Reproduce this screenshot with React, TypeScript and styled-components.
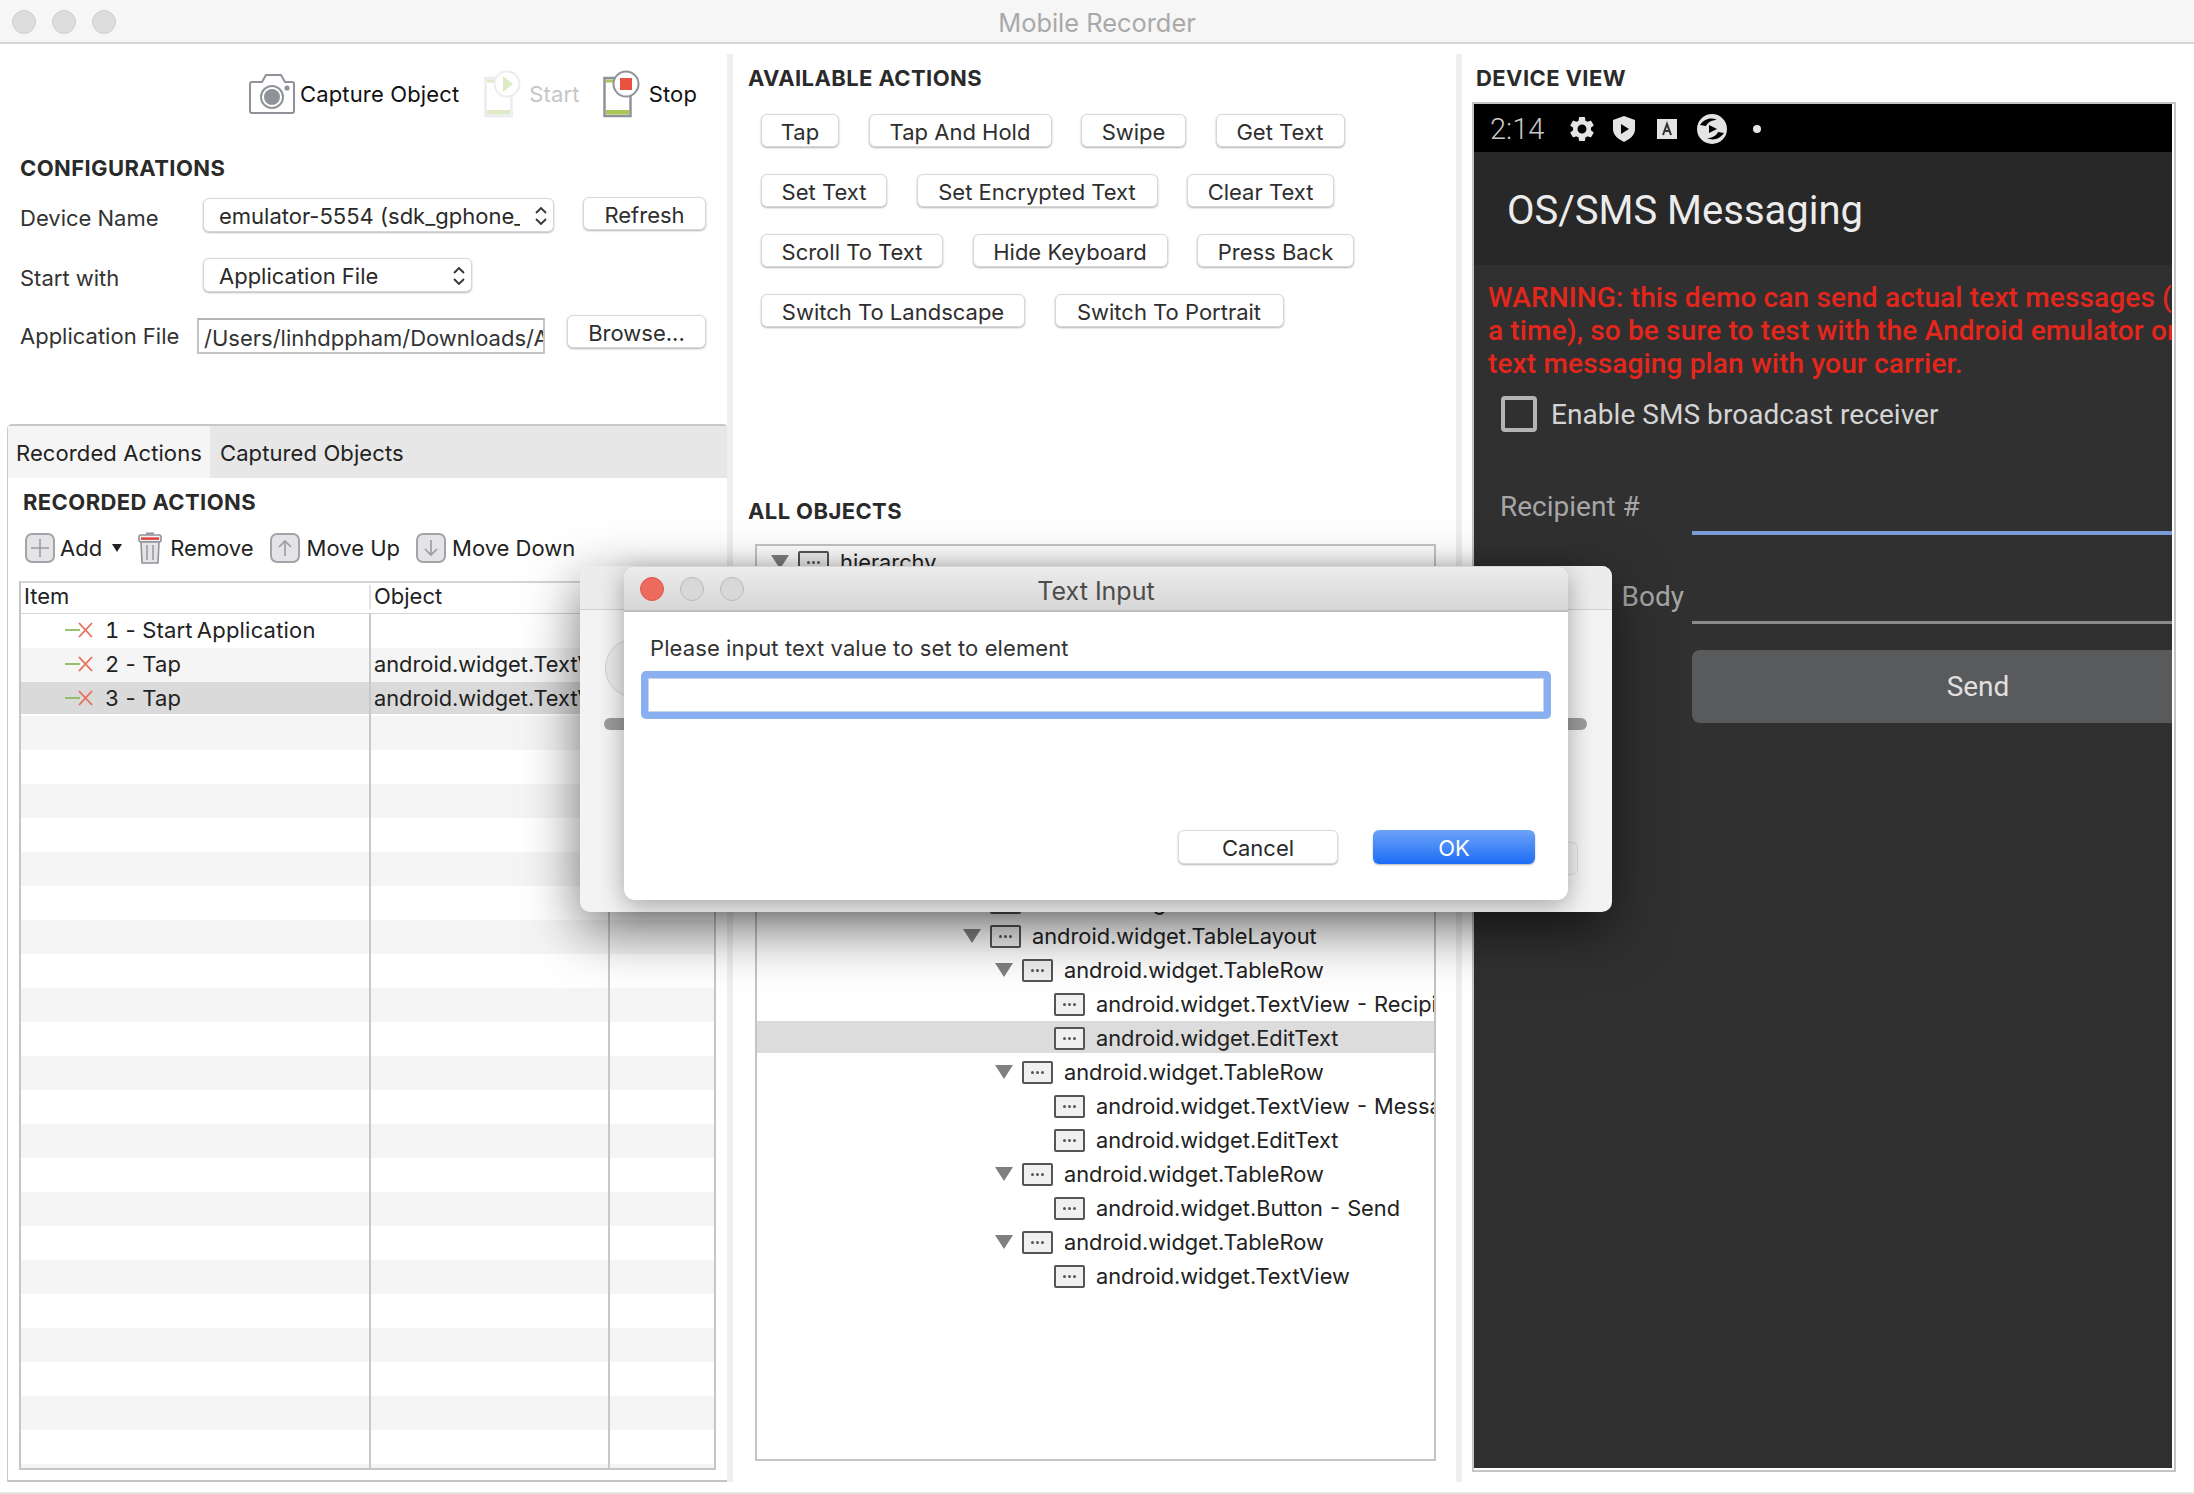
import React from "react";
import styled, { createGlobalStyle } from "styled-components";
import { MdSettings } from "react-icons/md";

const GlobalStyle = createGlobalStyle`
  html, body {
    margin: 0;
    padding: 0;
    background: #fff;
  }
  * {
    box-sizing: border-box;
  }
`;

const StyledApp = styled.div`
  position: relative;
  width: 2194px;
  height: 1494px;
  overflow: hidden;
  display: flex;
  flex-direction: column;
  background: #fff;
  color: #1f1f1f;
  font-family: Inter, "Liberation Sans", sans-serif;
  font-size: 22px;
`;

const TitleBar = styled.div`
  position: relative;
  flex: none;
  height: 44px;
  padding-top: 2px;
  display: flex;
  align-items: center;
  justify-content: center;
  background: #f6f6f6;
  border-bottom: 2px solid #d6d6d6;
  color: #a9a9a9;
  font-size: 25.4px;
`;

const Lights = styled.div`
  position: absolute;
  left: 12px;
  top: 10px;
  display: flex;
  gap: 16px;
`;

const Light = styled.span<{ $color?: string }>`
  width: 24px;
  height: 24px;
  border-radius: 50%;
  background: ${(p) => p.$color ?? "#dcdcdc"};
  border: 1px solid ${(p) => (p.$color ? "#d9574e" : "#cfcfcf")};
`;

const DialogLight = styled(Light)`
  background: ${(p) => p.$color ?? "#d8d8d8"};
  border-color: ${(p) => (p.$color ? "#d9574e" : "#b9b9b9")};
`;

const Body = styled.div`
  flex: 1;
  min-height: 0;
  display: flex;
  padding: 10px 0 10px;
`;

const Footer = styled.div`
  flex: none;
  height: 2px;
  background: #e5e5e5;
`;

const Sash = styled.div`
  flex: none;
  width: 6px;
  background: #efefef;
`;

const LeftColumn = styled.div`
  flex: none;
  width: 727px;
  display: flex;
  flex-direction: column;
`;

const MiddleColumn = styled.div`
  flex: none;
  width: 723px;
  padding: 10px 0 0 15px;
`;

const RightColumn = styled.div`
  flex: none;
  width: 732px;
  padding: 10px 0 0 10px;
`;

const TopBar = styled.div`
  margin-top: 16px;
  height: 48px;
  padding-left: 248px;
  display: flex;
  align-items: center;
  letter-spacing: 0.15px;
`;

const TopItem = styled.div<{ $gap: number; $after: number; $faded?: boolean }>`
  display: flex;
  align-items: center;
  gap: ${(p) => p.$gap}px;
  margin-right: ${(p) => p.$after}px;
  color: ${(p) => (p.$faded ? "#c6c6c6" : "#111")};
`;

const Heading = styled.h2<{ $left?: number; $top?: number }>`
  margin: ${(p) => p.$top ?? 0}px 0 0 ${(p) => p.$left ?? 0}px;
  height: 28px;
  line-height: 28px;
  font-size: 22px;
  font-weight: 700;
  letter-spacing: 0.4px;
  color: #2a2a2a;
`;

const FieldRow = styled.div<{ $top: number }>`
  display: flex;
  align-items: flex-start;
  margin-top: ${(p) => p.$top}px;
  padding-left: 20px;
  height: 34px;
`;

const FieldLabel = styled.span<{ $width: number; $drop: number }>`
  flex: none;
  width: ${(p) => p.$width}px;
  line-height: 34px;
  margin-top: ${(p) => p.$drop}px;
  color: #333;
`;

const Select = styled.div<{ $width: number }>`
  flex: none;
  width: ${(p) => p.$width}px;
  height: 34px;
  padding: 2px 5px 0 15px;
  display: flex;
  align-items: center;
  justify-content: space-between;
  background: #fff;
  border: 1px solid #d6d6d6;
  border-radius: 6px;
  box-shadow: 0 1px 2px rgba(0, 0, 0, 0.28);
  color: #2a2a2a;
  white-space: nowrap;
  overflow: hidden;
`;

const SelectText = styled.span`
  overflow: hidden;
  flex: 1;
  margin-right: 14px;
`;

const PathInput = styled.div`
  flex: none;
  width: 348px;
  height: 36px;
  margin-top: 3px;
  padding: 0 4px 0 5px;
  line-height: 36px;
  border: 2px solid #c4c4c4;
  border-top-color: #b4b4b4;
  white-space: nowrap;
  overflow: hidden;
  color: #333;
`;

const PushButton = styled.div<{ $width: number; $left?: number; $drop?: number }>`
  flex: none;
  width: ${(p) => p.$width}px;
  height: 33px;
  margin-left: ${(p) => p.$left ?? 0}px;
  margin-top: ${(p) => p.$drop ?? 0}px;
  display: flex;
  align-items: center;
  justify-content: center;
  padding-top: 3px;
  background: #fff;
  border: 1px solid #d8d8d8;
  border-radius: 6px;
  box-shadow: 0 1px 2px rgba(0, 0, 0, 0.3);
  color: #2e2e2e;
  white-space: nowrap;
`;

const TabPane = styled.div`
  margin: auto 0 0 7px;
  width: 721px;
  height: 1058px;
  display: flex;
  flex-direction: column;
  border: 1px solid #cbcbcb;
  border-top: 2px solid #c8c8c8;
  border-bottom: 2px solid #c4c4c4;
  border-radius: 5px 5px 0 0;
`;

const TabBar = styled.div`
  flex: none;
  height: 52px;
  display: flex;
  background: #e7e7e7;
`;

const Tab = styled.div<{ $active?: boolean }>`
  width: ${(p) => (p.$active ? 202 : 240)}px;
  padding-left: ${(p) => (p.$active ? 8 : 10)}px;
  line-height: 54px;
  letter-spacing: 0.1px;
  background: ${(p) => (p.$active ? "#f5f5f5" : "transparent")};
  color: #222;
`;

const ActionBar = styled.div`
  margin: 14px 0 0 17px;
  height: 36px;
  display: flex;
  align-items: center;
`;

const ActionItem = styled.div<{ $gap: number; $after: number }>`
  display: flex;
  align-items: center;
  gap: ${(p) => p.$gap}px;
  margin-right: ${(p) => p.$after}px;
  color: #222;
`;

const Table = styled.div`
  margin: 15px 0 0 11px;
  width: 697px;
  height: 889px;
  overflow: hidden;
  border: 2px solid #c6c6c6;
  border-top-color: #d4d4d4;
`;

const TableHead = styled.div`
  height: 31px;
  padding-bottom: 2px;
  display: grid;
  grid-template-columns: 350px 239px 1fr;
  align-items: center;
  border-bottom: 1px solid #d4d4d4;
`;

const HeadCell = styled.div<{ $divider?: boolean }>`
  padding-left: 3px;
  height: 24px;
  line-height: 22px;
  border-right: ${(p) => (p.$divider ? "2px solid #e2e2e2" : "none")};
  color: #222;
`;

const TableRow = styled.div<{ $stripe: boolean; $selected: boolean }>`
  height: 34px;
  display: grid;
  grid-template-columns: 350px 239px 1fr;
  background: ${(p) => (p.$selected ? "linear-gradient(#dadada 32px, #fff 32px)" : p.$stripe ? "#f4f5f4" : "#fff")};
`;

const Cell = styled.div`
  display: flex;
  align-items: center;
  padding: 0 0 2px 3px;
  border-right: 2px solid #c8c8c8;
  font-size: 21.8px;
  white-space: nowrap;
  overflow: hidden;
  color: #222;
`;

const ItemCell = styled(Cell)`
  padding-left: 43px;
  gap: 11px;
  font-size: 22px;
  font-variant-numeric: tabular-nums;
  letter-spacing: 0.2px;
  word-spacing: -2px;
`;

const ButtonRows = styled.div`
  margin: 22px 0 0 13px;
  display: flex;
  flex-direction: column;
  gap: 27px;
`;

const ButtonRow = styled.div`
  display: flex;
  gap: 29.5px;
`;

const TreeBox = styled.div`
  margin: 19px 0 0 7px;
  width: 681px;
  height: 917px;
  border: 2px solid #c4c4c4;
  overflow: hidden;
  background: #fff;
`;

const TreeList = styled.div`
  margin-top: -2px;
`;

const TreeRow = styled.div<{ $level: number; $selected?: boolean }>`
  height: 34px;
  display: flex;
  align-items: center;
  padding: 2px 0 0 ${(p) => 14 + p.$level * 32}px;
  background: ${(p) => (p.$selected ? "linear-gradient(#fff 1px, #dcdcdc 1px, #dcdcdc 33px, #fff 33px)" : "transparent")};
  font-size: 21.8px;
  word-spacing: 1px;
  white-space: nowrap;
  color: #222;
`;

const TwistySlot = styled.span`
  flex: none;
  width: 18px;
  height: 14px;
  margin-right: 9px;
  display: flex;
`;

const TreeIconBox = styled.span`
  flex: none;
  width: 31px;
  height: 23px;
  margin: 0 11px 0 0;
  display: flex;
  align-items: center;
  justify-content: center;
  gap: 2px;
  background: #f0f0f0;
  border: 2px solid #555;
  border-radius: 2px;
`;

const Dot = styled.i`
  width: 3px;
  height: 3px;
  border-radius: 50%;
  background: #555;
`;

const DeviceFrame = styled.div`
  width: 704px;
  height: 1370px;
  margin-top: 10px;
  padding: 0 2px 2px 0;
  border: 2px solid #c4c4c4;
  background: #fff;
`;

const Screen = styled.div`
  height: 100%;
  display: flex;
  flex-direction: column;
  overflow: hidden;
  background: #303030;
  font-family: Roboto, "Liberation Sans", sans-serif;
`;

const StatusBar = styled.div`
  flex: none;
  height: 48px;
  padding: 2px 0 0 16px;
  display: flex;
  align-items: center;
  background: #000;
  color: #c8c8c8;
  font-size: 29px;
  font-weight: 300;
`;

const StatusTime = styled.span`
  width: 77px;
`;

const StatusIcon = styled.span<{ $after: number }>`
  display: flex;
  margin-right: ${(p) => p.$after}px;
`;

const AppBar = styled.div`
  flex: none;
  height: 113px;
  padding: 4px 0 0 33px;
  display: flex;
  align-items: center;
  background: #282828;
  color: #ececec;
  font-size: 40px;
  white-space: nowrap;
`;

const Warning = styled.div`
  margin: 16px 0 0 14px;
  width: 760px;
  font-size: 28px;
  font-weight: 500;
  letter-spacing: 0.15px;
  line-height: 33px;
  color: #e4261c;
  white-space: nowrap;
`;

const CheckRow = styled.div`
  margin: 16px 0 0 27px;
  display: flex;
  align-items: center;
  gap: 14px;
  color: #d4d4d4;
  font-size: 28px;
  letter-spacing: 0.05px;
  white-space: nowrap;
`;

const CheckBox = styled.span`
  flex: none;
  width: 36px;
  height: 36px;
  border: 4px solid #b4b4b4;
  border-radius: 4px;
`;

const FormRow = styled.div<{ $height: number; $top: number }>`
  height: ${(p) => p.$height}px;
  margin-top: ${(p) => p.$top}px;
  display: flex;
  align-items: flex-end;
  padding-left: 14px;
`;

const FormLabel = styled.div<{ $right?: boolean; $lift: number }>`
  flex: none;
  width: 204px;
  height: 36px;
  line-height: 36px;
  margin-bottom: ${(p) => p.$lift}px;
  padding: ${(p) => (p.$right ? "0 8px 0 0" : "0 0 0 12px")};
  text-align: ${(p) => (p.$right ? "right" : "left")};
  font-size: 28px;
  color: #a6a6a6;
`;

const FieldLine = styled.div<{ $color: string; $thick: number }>`
  flex: 1;
  height: ${(p) => p.$thick}px;
  background: ${(p) => p.$color};
`;

const SendButton = styled.div`
  flex: none;
  width: 572px;
  height: 73px;
  margin: 26px 0 0 218px;
  display: flex;
  align-items: center;
  justify-content: center;
  border-radius: 8px;
  background: #595a5c;
  color: #e0e0e0;
  font-size: 28px;
`;

const BackDialog = styled.div`
  position: absolute;
  left: 580px;
  top: 566px;
  width: 1032px;
  height: 346px;
  overflow: hidden;
  border-radius: 10px;
  background: #f3f3f3;
  box-shadow: 0 18px 55px rgba(0, 0, 0, 0.55);
`;

const BackTitle = styled.div`
  height: 44px;
  background: #ececec;
  border-bottom: 1px solid #cfcfcf;
`;

const GhostKnob = styled.div`
  position: absolute;
  left: 25px;
  top: 72px;
  width: 60px;
  height: 60px;
  border-radius: 50%;
  background: #e9e9e9;
  border: 1px solid #cdcdcd;
`;

const GhostPill = styled.div<{ $x: number }>`
  position: absolute;
  left: ${(p) => p.$x}px;
  top: 152px;
  width: 60px;
  height: 12px;
  border-radius: 6px;
  background: #9b9b9b;
`;

const GhostButton = styled.div`
  position: absolute;
  left: 960px;
  top: 276px;
  width: 38px;
  height: 33px;
  border-radius: 6px;
  background: #f1f1f1;
  border: 1px solid #dcdcdc;
`;

const Dialog = styled.div`
  position: absolute;
  left: 624px;
  top: 567px;
  width: 944px;
  height: 333px;
  display: flex;
  flex-direction: column;
  overflow: hidden;
  border-radius: 11px;
  background: #fff;
  box-shadow: 0 6px 26px rgba(0, 0, 0, 0.32);
`;

const DialogTitle = styled.div`
  flex: none;
  height: 45px;
  display: grid;
  grid-template-columns: 1fr auto 1fr;
  align-items: center;
  padding: 0 16px;
  background: linear-gradient(#ececec, #d6d6d6);
  border-bottom: 2px solid #bdbdbd;
  color: #4c4c4c;
  font-size: 25px;
`;

const DialogHeading = styled.span`
  padding-top: 4px;
`;

const DialogLights = styled.div`
  display: flex;
  gap: 16px;
`;

const DialogBody = styled.div`
  flex: 1;
  display: flex;
  flex-direction: column;
  padding: 22px 17px 0 17px;
`;

const Prompt = styled.div`
  padding-left: 9px;
  line-height: 28px;
  letter-spacing: 0.1px;
  color: #333;
`;

const TextBox = styled.div`
  margin-top: 9px;
  height: 48px;
  background: #fff;
  border: 7px solid #8ab0f2;
  border-radius: 5px;
  box-shadow: inset 0 0 0 1px #c8d4ea;
`;

const DialogActions = styled.div`
  margin-top: 111px;
  display: flex;
  justify-content: flex-end;
  gap: 35px;
  padding-right: 16px;
`;

const DialogButton = styled.div<{ $primary?: boolean }>`
  width: ${(p) => (p.$primary ? 162 : 160)}px;
  height: 34px;
  padding-top: 2px;
  display: flex;
  align-items: center;
  justify-content: center;
  border-radius: 6px;
  border: ${(p) => (p.$primary ? "none" : "1px solid #dcdcdc")};
  background: ${(p) => (p.$primary ? "linear-gradient(#6da3f8, #1d6df6)" : "#fff")};
  box-shadow: 0 1px 2px rgba(0, 0, 0, 0.3);
  color: ${(p) => (p.$primary ? "#fff" : "#2a2a2a")};
`;

const CameraIcon = () => (
  <svg width="48" height="42" viewBox="0 0 48 42">
    <path d="M2 11a2 2 0 0 1 2-2h10l4-7h15l4 7h7a2 2 0 0 1 2 2v27a2 2 0 0 1-2 2H4a2 2 0 0 1-2-2z" fill="#fff" stroke="#8f9299" strokeWidth="2" />
    <circle cx="24" cy="24" r="11" fill="#fff" stroke="#8f9299" strokeWidth="2" />
    <circle cx="24" cy="24" r="8" fill="#8f9299" />
    <circle cx="39" cy="15" r="2.6" fill="#8f9299" />
  </svg>
);

const PhoneIcon = ({ faded, stop }: { faded?: boolean; stop?: boolean }) => {
  const line = faded ? "#ebecef" : "#8f9299";
  const green = faded ? "#dfeac6" : "#a9c755";
  return (
    <svg width="38" height="48" viewBox="0 0 38 48">
      <rect x="1.5" y="8" width="26" height="38" fill="#fff" stroke={line} strokeWidth="2.5" />
      <rect x="3" y="9.5" width="10" height="3" fill={green} />
      <rect x="3" y="40" width="23" height="4.5" fill={green} />
      <circle cx="23" cy="14" r="12.5" fill="#fff" stroke={line} strokeWidth="2" />
      {stop ? <rect x="17" y="8" width="12" height="12" fill="#e8523f" /> : <path d="M19 6l10 8-10 8z" fill={green} />}
    </svg>
  );
};

const PlusIcon = () => (
  <svg width="30" height="30" viewBox="0 0 30 30">
    <rect x="1" y="1" width="28" height="28" rx="6" fill="#e4e4e7" stroke="#a2a4aa" strokeWidth="2" />
    <path d="M15 6v18M6 15h18" stroke="#9a9ca2" strokeWidth="1.6" />
  </svg>
);

const ArrowIcon = ({ down }: { down?: boolean }) => (
  <svg width="30" height="30" viewBox="0 0 30 30">
    <rect x="1" y="1" width="28" height="28" rx="6" fill="#e4e4e7" stroke="#a2a4aa" strokeWidth="2" />
    {down ? (
      <path d="M15 7v15M9 16l6 6 6-6" fill="none" stroke="#9a9ca2" strokeWidth="1.6" />
    ) : (
      <path d="M15 23V8M9 14l6-6 6 6" fill="none" stroke="#9a9ca2" strokeWidth="1.6" />
    )}
  </svg>
);

const TrashIcon = () => (
  <svg width="24" height="32" viewBox="0 0 24 32">
    <path d="M8 1.5h8" stroke="#8f9299" strokeWidth="2" />
    <rect x="1" y="3" width="22" height="7" rx="2" fill="#f0f0f2" stroke="#8f9299" strokeWidth="1.6" />
    <rect x="3" y="5.4" width="18" height="2.4" fill="#e33b32" />
    <path d="M3 10h18l-1 21H4z" fill="#e4e4e7" stroke="#8f9299" strokeWidth="1.6" />
    <path d="M9 13v15M15 13v15" stroke="#8f9299" strokeWidth="1.4" />
  </svg>
);

const StepIcon = () => (
  <svg width="30" height="16" viewBox="0 0 30 16">
    <path d="M1 8h15" stroke="#8dbb63" strokeWidth="1.8" />
    <path d="M15 1l13 14M28 1L15 15" stroke="#e96a56" strokeWidth="1.8" />
  </svg>
);

const Chevrons = () => (
  <svg width="14" height="22" viewBox="0 0 14 22">
    <path d="M2 8l5-5 5 5M2 14l5 5 5-5" fill="none" stroke="#333" strokeWidth="1.8" />
  </svg>
);

const Twisty = () => (
  <svg width="18" height="14" viewBox="0 0 18 14">
    <path d="M0 0h18l-9 14z" fill="#808080" />
  </svg>
);

const DropArrow = () => (
  <svg width="10" height="8" viewBox="0 0 10 8">
    <path d="M0 0h10L5 8z" fill="#222" />
  </svg>
);

const ShieldPlay = () => (
  <svg width="24" height="28" viewBox="0 0 24 28">
    <path d="M12 1l11 4v9c0 6-5 10-11 13C6 24 1 20 1 14V5z" fill="#e4e4e4" />
    <path d="M9 9l8 5-8 5z" fill="#000" />
  </svg>
);

const BoxA = () => (
  <svg width="20" height="20" viewBox="0 0 20 20">
    <rect width="20" height="20" fill="#e4e4e4" />
    <path d="M6 16l4-11 4 11M7.5 12h5" fill="none" stroke="#333" strokeWidth="2" />
  </svg>
);

const Swirl = () => (
  <svg width="30" height="30" viewBox="0 0 30 30">
    <circle cx="15" cy="15" r="15" fill="#e4e4e4" />
    <path d="M3 11c4-6 11-8 17-5-5 0-9 2-11 6zM27 19c-4 6-11 8-17 5 5 0 9-2 11-6z" fill="#000" />
    <path d="M12 11l8 4-8 4z" fill="#000" />
  </svg>
);

const ACTION_ROWS: [string, number][][] = [
  [["Tap", 78], ["Tap And Hold", 183], ["Swipe", 105], ["Get Text", 129]],
  [["Set Text", 126], ["Set Encrypted Text", 241], ["Clear Text", 147]],
  [["Scroll To Text", 182], ["Hide Keyboard", 195], ["Press Back", 157]],
  [["Switch To Landscape", 264], ["Switch To Portrait", 229]],
];

const STEPS = [
  { label: "1 - Start Application", object: "" },
  { label: "2 - Tap", object: "android.widget.TextView - Recipient #" },
  { label: "3 - Tap", object: "android.widget.TextView - Recipient #" },
];

type Node = { level: number; name: string; open?: boolean; selected?: boolean };

const TREE: Node[] = [
  { level: 0, name: "hierarchy", open: true },
  { level: 1, name: "android.widget.FrameLayout", open: true },
  { level: 2, name: "android.widget.LinearLayout", open: true },
  { level: 3, name: "android.widget.FrameLayout", open: true },
  { level: 4, name: "android.widget.LinearLayout", open: true },
  { level: 5, name: "android.widget.FrameLayout", open: true },
  { level: 6, name: "android.widget.TextView" },
  { level: 6, name: "android.widget.TextView" },
  { level: 6, name: "android.widget.TextView" },
  { level: 6, name: "android.widget.CheckBox" },
  { level: 6, name: "android.widget.TextView" },
  { level: 6, name: "android.widget.TableLayout", open: true },
  { level: 7, name: "android.widget.TableRow", open: true },
  { level: 8, name: "android.widget.TextView - Recipient #" },
  { level: 8, name: "android.widget.EditText", selected: true },
  { level: 7, name: "android.widget.TableRow", open: true },
  { level: 8, name: "android.widget.TextView - Message Body" },
  { level: 8, name: "android.widget.EditText" },
  { level: 7, name: "android.widget.TableRow", open: true },
  { level: 8, name: "android.widget.Button - Send" },
  { level: 7, name: "android.widget.TableRow", open: true },
  { level: 8, name: "android.widget.TextView" },
];

const App = () => {
  return (
    <StyledApp>
      <GlobalStyle />
      <TitleBar>
        <Lights>
          <Light />
          <Light />
          <Light />
        </Lights>
        Mobile Recorder
      </TitleBar>
      <Body>
        <LeftColumn>
          <TopBar>
            <TopItem $gap={4} $after={25}>
              <CameraIcon />
              Capture Object
            </TopItem>
            <TopItem $gap={7} $after={23} $faded>
              <PhoneIcon faded />
              Start
            </TopItem>
            <TopItem $gap={8} $after={0}>
              <PhoneIcon stop />
              Stop
            </TopItem>
          </TopBar>
          <Heading $left={20} $top={36}>
            CONFIGURATIONS
          </Heading>
          <FieldRow $top={16}>
            <FieldLabel $width={183} $drop={3}>
              Device Name
            </FieldLabel>
            <Select $width={351}>
              <SelectText>emulator-5554 (sdk_gphone_x86)</SelectText>
              <Chevrons />
            </Select>
            <PushButton $width={123} $left={29} $drop={-1}>
              Refresh
            </PushButton>
          </FieldRow>
          <FieldRow $top={26}>
            <FieldLabel $width={183} $drop={3}>
              Start with
            </FieldLabel>
            <Select $width={269}>
              <SelectText>Application File</SelectText>
              <Chevrons />
            </Select>
          </FieldRow>
          <FieldRow $top={23}>
            <FieldLabel $width={177} $drop={4}>
              Application File
            </FieldLabel>
            <PathInput>/Users/linhdppham/Downloads/Application.apk</PathInput>
            <PushButton $width={139} $left={22}>
              Browse...
            </PushButton>
          </FieldRow>
          <TabPane>
            <TabBar>
              <Tab $active>Recorded Actions</Tab>
              <Tab>Captured Objects</Tab>
            </TabBar>
            <Heading $left={15} $top={10}>
              RECORDED ACTIONS
            </Heading>
            <ActionBar>
              <ActionItem $gap={5} $after={10}>
                <PlusIcon />
                Add
              </ActionItem>
              <ActionItem $gap={0} $after={16}>
                <DropArrow />
              </ActionItem>
              <ActionItem $gap={8} $after={16}>
                <TrashIcon />
                Remove
              </ActionItem>
              <ActionItem $gap={7} $after={16}>
                <ArrowIcon />
                Move Up
              </ActionItem>
              <ActionItem $gap={6} $after={0}>
                <ArrowIcon down />
                Move Down
              </ActionItem>
            </ActionBar>
            <Table>
              <TableHead>
                <HeadCell $divider>Item</HeadCell>
                <HeadCell>Object</HeadCell>
              </TableHead>
              {Array.from({ length: 26 }, (_, i) => (
                <TableRow key={i} $stripe={i % 2 === 1} $selected={i === 2}>
                  {STEPS[i] ? (
                    <ItemCell>
                      <StepIcon />
                      {STEPS[i].label}
                    </ItemCell>
                  ) : (
                    <Cell />
                  )}
                  <Cell>{STEPS[i]?.object}</Cell>
                </TableRow>
              ))}
            </Table>
          </TabPane>
        </LeftColumn>
        <Sash />
        <MiddleColumn>
          <Heading>AVAILABLE ACTIONS</Heading>
          <ButtonRows>
            {ACTION_ROWS.map((row, r) => (
              <ButtonRow key={r}>
                {row.map(([label, width]) => (
                  <PushButton key={label} $width={width}>
                    {label}
                  </PushButton>
                ))}
              </ButtonRow>
            ))}
          </ButtonRows>
          <Heading $top={170}>ALL OBJECTS</Heading>
          <TreeBox>
            <TreeList>
              {TREE.map((node, i) => (
                <TreeRow key={i} $level={node.level} $selected={node.selected}>
                  <TwistySlot>{node.open && <Twisty />}</TwistySlot>
                  <TreeIconBox>
                    <Dot />
                    <Dot />
                    <Dot />
                  </TreeIconBox>
                  {node.name}
                </TreeRow>
              ))}
            </TreeList>
          </TreeBox>
        </MiddleColumn>
        <Sash />
        <RightColumn>
          <Heading $left={4}>DEVICE VIEW</Heading>
          <DeviceFrame>
            <Screen>
              <StatusBar>
                <StatusTime>2:14</StatusTime>
                <StatusIcon $after={15}>
                  <MdSettings size={30} color="#e4e4e4" />
                </StatusIcon>
                <StatusIcon $after={21}>
                  <ShieldPlay />
                </StatusIcon>
                <StatusIcon $after={20}>
                  <BoxA />
                </StatusIcon>
                <StatusIcon $after={26}>
                  <Swirl />
                </StatusIcon>
                <StatusIcon $after={0}>
                  <svg width="8" height="8" viewBox="0 0 8 8">
                    <circle cx="4" cy="4" r="4" fill="#e4e4e4" />
                  </svg>
                </StatusIcon>
              </StatusBar>
              <AppBar>OS/SMS Messaging</AppBar>
              <Warning>
                WARNING: this demo can send actual text messages (one at
                <br />a time), so be sure to test with the Android emulator or have a
                <br />
                text messaging plan with your carrier.
              </Warning>
              <CheckRow>
                <CheckBox />
                Enable SMS broadcast receiver
              </CheckRow>
              <FormRow $height={64} $top={39}>
                <FormLabel $lift={10}>Recipient #</FormLabel>
                <FieldLine $color="#7b9bd6" $thick={4} />
              </FormRow>
              <FormRow $height={89} $top={0}>
                <FormLabel $right $lift={9}>
                  Body
                </FormLabel>
                <FieldLine $color="#8a8a8a" $thick={3} />
              </FormRow>
              <SendButton>Send</SendButton>
            </Screen>
          </DeviceFrame>
        </RightColumn>
      </Body>
      <Footer />

      <BackDialog>
        <BackTitle />
        <GhostKnob />
        <GhostPill $x={24} />
        <GhostPill $x={947} />
        <GhostButton />
      </BackDialog>
      <Dialog>
        <DialogTitle>
          <DialogLights>
            <DialogLight $color="#ee6a5f" />
            <DialogLight />
            <DialogLight />
          </DialogLights>
          <DialogHeading>Text Input</DialogHeading>
          <span />
        </DialogTitle>
        <DialogBody>
          <Prompt>Please input text value to set to element</Prompt>
          <TextBox />
          <DialogActions>
            <DialogButton>Cancel</DialogButton>
            <DialogButton $primary>OK</DialogButton>
          </DialogActions>
        </DialogBody>
      </Dialog>
    </StyledApp>
  );
};

export default App;
